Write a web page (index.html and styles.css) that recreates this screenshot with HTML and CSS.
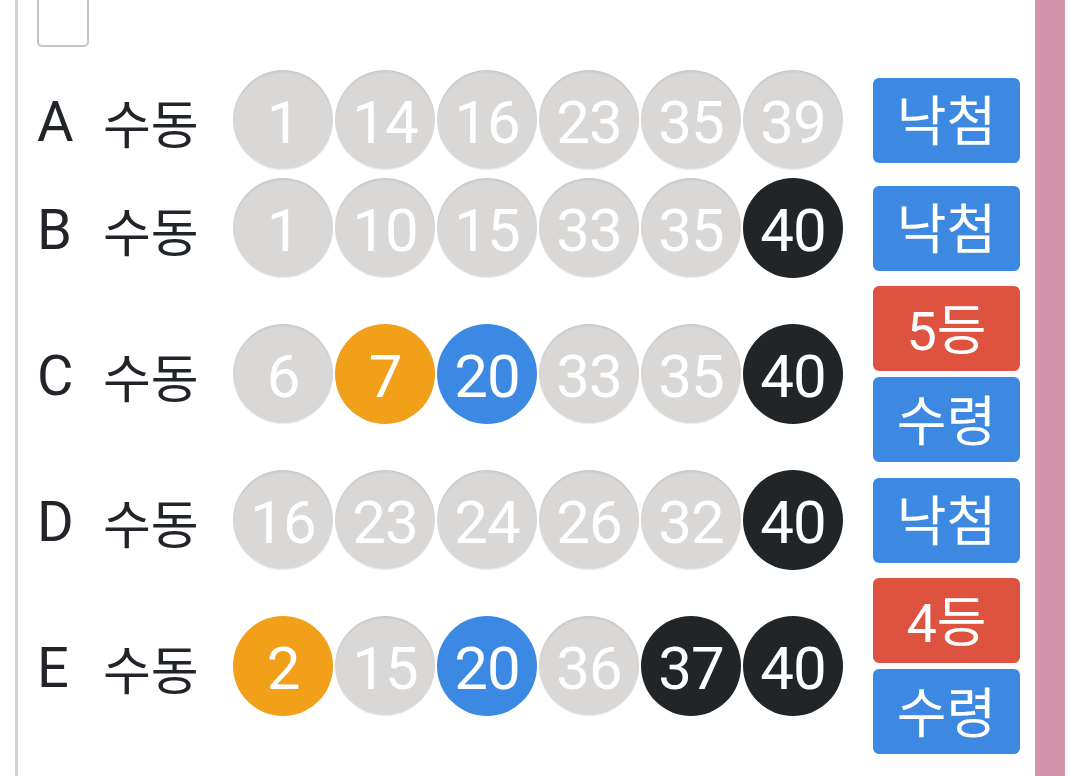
FILE: index.html
```html
<!DOCTYPE html>
<html lang="ko">
<head>
<meta charset="utf-8">
<link rel="stylesheet" href="styles.css">
</head>
<body>
<div class="page">
  <div class="panel">
    <div class="checkbox"></div>
    <div class="row">
      <span class="letter">A</span><span class="mode">수동</span>
      <div class="balls">
        <span class="ball gray">1</span><span class="ball gray">14</span><span class="ball gray">16</span><span class="ball gray">23</span><span class="ball gray">35</span><span class="ball gray">39</span>
      </div>
      <div class="badges"><span class="badge blue">낙첨</span></div>
    </div>
    <div class="row">
      <span class="letter">B</span><span class="mode">수동</span>
      <div class="balls">
        <span class="ball gray">1</span><span class="ball gray">10</span><span class="ball gray">15</span><span class="ball gray">33</span><span class="ball gray">35</span><span class="ball dark">40</span>
      </div>
      <div class="badges"><span class="badge blue">낙첨</span></div>
    </div>
    <div class="row">
      <span class="letter">C</span><span class="mode">수동</span>
      <div class="balls">
        <span class="ball gray">6</span><span class="ball orange">7</span><span class="ball blueb">20</span><span class="ball gray">33</span><span class="ball gray">35</span><span class="ball dark">40</span>
      </div>
      <div class="badges"><span class="badge red">5등</span><span class="badge blue">수령</span></div>
    </div>
    <div class="row">
      <span class="letter">D</span><span class="mode">수동</span>
      <div class="balls">
        <span class="ball gray">16</span><span class="ball gray">23</span><span class="ball gray">24</span><span class="ball gray">26</span><span class="ball gray">32</span><span class="ball dark">40</span>
      </div>
      <div class="badges"><span class="badge blue">낙첨</span></div>
    </div>
    <div class="row">
      <span class="letter">E</span><span class="mode">수동</span>
      <div class="balls">
        <span class="ball orange">2</span><span class="ball gray">15</span><span class="ball blueb">20</span><span class="ball gray">36</span><span class="ball dark">37</span><span class="ball dark">40</span>
      </div>
      <div class="badges"><span class="badge red">4등</span><span class="badge blue">수령</span></div>
    </div>
  </div>
  <div class="pinkbar"></div>
</div>
</body>
</html>
```

FILE: styles.css
```css
html, body {
  margin: 0;
  padding: 0;
  background: #ffffff;
  overflow: hidden;
}
body {
  font-family: "Roboto", "Noto Sans CJK KR", sans-serif;
  color: #212529;
}
.page {
  display: flex;
  height: 776px;
  overflow: hidden;
}
.panel {
  margin-left: 15px;
  width: 1017px;
  border-left: 3px solid #d2d2d2;
  padding-left: 19px;
  box-sizing: border-box;
  overflow: hidden;
}
.checkbox {
  width: 52px;
  height: 54px;
  margin-top: -7px;
  margin-bottom: 19px;
  box-sizing: border-box;
  border: 2px solid #c4c4c4;
  border-radius: 5px;
}
.row {
  display: flex;
  align-items: center;
  padding: 4px 0;
}
.letter {
  width: 66px;
  font-size: 56px;
  line-height: 1;
  padding-top: 4px;
}
.mode {
  width: 130px;
  font-size: 52px;
  line-height: 1;
  padding-top: 4px;
  font-family: "Noto Sans CJK KR", sans-serif;
}
.balls {
  display: flex;
  gap: 2px;
}
.ball {
  width: 100px;
  height: 100px;
  box-sizing: border-box;
  padding-top: 6px;
  border-radius: 50%;
  display: flex;
  align-items: center;
  justify-content: center;
  color: #ffffff;
  font-size: 60px;
  line-height: 1;
  letter-spacing: -1px;
}
.gray {
  background: #d9d8d7;
  box-shadow: inset 0 2px 2px rgba(0, 0, 0, 0.07), inset 0 -1px 1px rgba(255, 255, 255, 0.6);
}
.orange { background: #f29f1a; }
.blueb { background: #3b89e2; }
.dark { background: #212527; }
.badges {
  margin-left: 30px;
  display: flex;
  flex-direction: column;
  gap: 6px;
}
.badge {
  width: 147px;
  height: 85px;
  box-sizing: border-box;
  padding-top: 6px;
  border-radius: 6px;
  display: flex;
  align-items: center;
  justify-content: center;
  color: #ffffff;
  font-family: "Roboto", "Noto Sans CJK KR", sans-serif;
  font-size: 54px;
  line-height: 1;
}
.badge.blue { background: #3d89e2; }
.badge.red { background: #de5340; }
.pinkbar {
  margin-left: 3px;
  width: 30px;
  background: #d293ab;
  flex-shrink: 0;
}
```
